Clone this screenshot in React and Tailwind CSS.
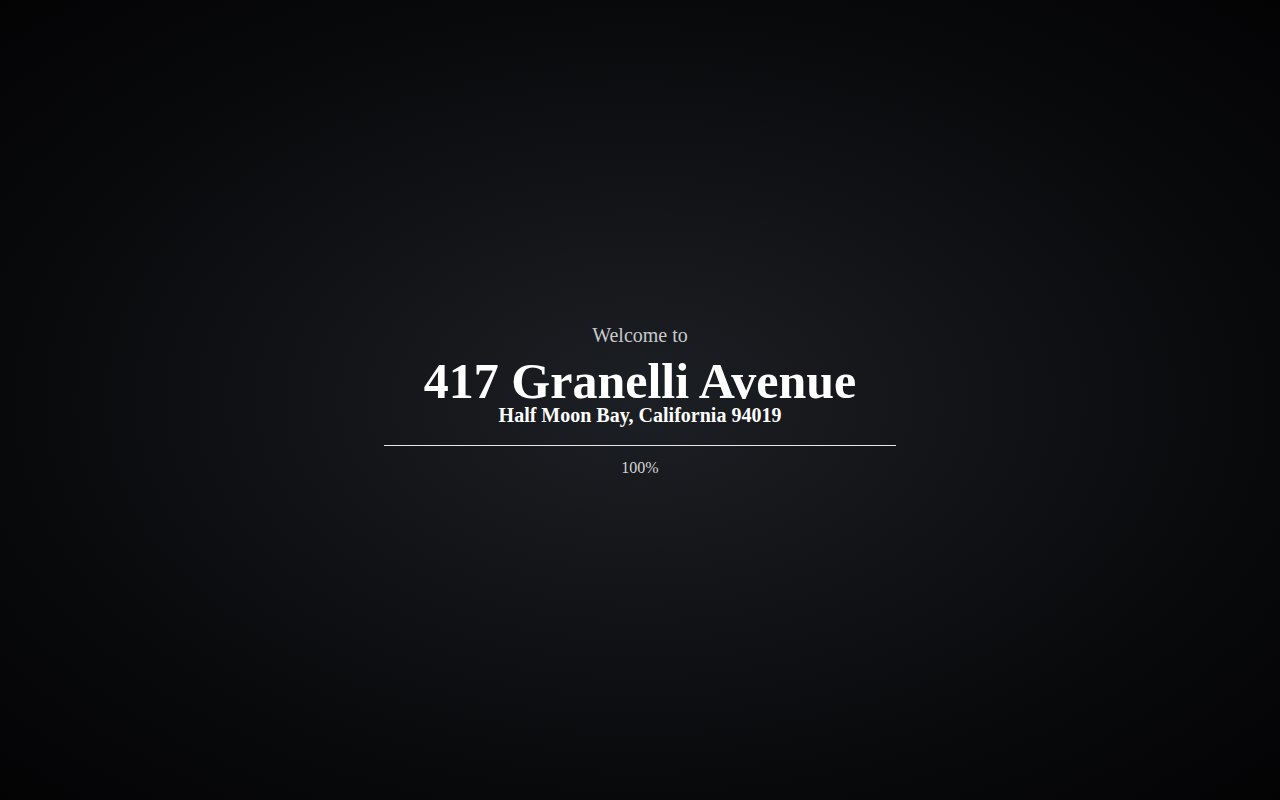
import React from 'react'

const App = () => {
  return (
    <div
      className="w-full h-screen flex flex-col items-center justify-center bg-[radial-gradient(ellipse_at_center,#1c1f23_0%,#15171b_25%,#101215_40%,#08090b_70%,#030304_100%)]"
      style={{ fontFamily: '"Liberation Serif", "Times New Roman", serif' }}
    >
      <div className="flex flex-col items-center w-[512px] mt-[2px]">
        <p className="text-[20px] leading-[23px] text-[#c9cacc]">Welcome to</p>
        <h1 className="mt-[11px] text-[50px] leading-[46px] font-bold text-white">
          417 Granelli Avenue
        </h1>
        <h2 className="text-[20px] leading-[22px] font-bold text-white">
          Half Moon Bay, California 94019
        </h2>
        <div className="w-full h-px bg-[#e6e6e6] mt-[19px]"></div>
        <p className="mt-[12px] text-[16px] leading-[20px] text-[#d4d5d7]">100%</p>
      </div>
    </div>
  )
}

export default App
